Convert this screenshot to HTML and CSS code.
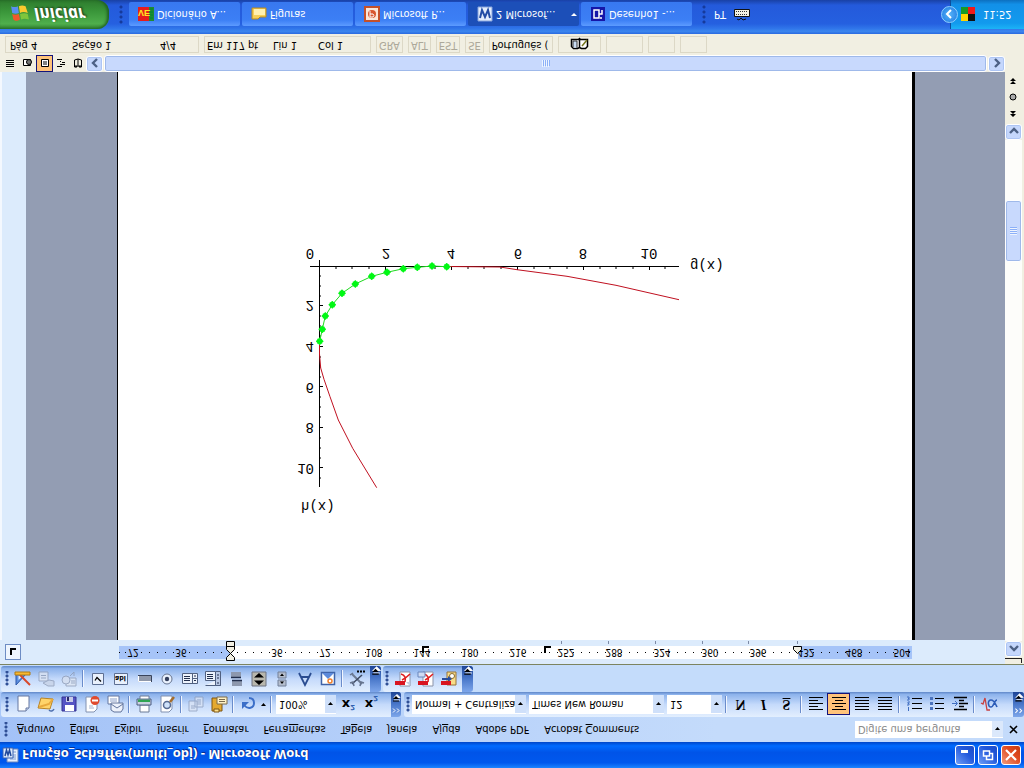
FILE: index.html
```html
<!DOCTYPE html>
<html lang="pt">
<head>
<meta charset="utf-8">
<title>Função_Schaffer(multi_obj) - Microsoft Word</title>
<link rel="stylesheet" href="styles.css">
</head>
<body>
<svg class="defs" aria-hidden="true">
  <defs>
    <symbol id="more" viewBox="0 0 10 24"><path d="M3 17.500h6M3 20h6l-3 3z" stroke="#fff" fill="#fff"/><path d="M2 16.500h6" stroke="#000"/><path d="M2 18.500h6l-3 3z" fill="#000"/></symbol>
    <symbol id="chev" viewBox="0 0 10 24"><path d="M2 4l2 2-2 2M6 4l2 2-2 2" stroke="#fff" fill="none"/><path d="M3 16.500h6M3 19h6l-3 3z" stroke="#fff" fill="#fff"/><path d="M2 15.500h6" stroke="#000"/><path d="M2 17.500h6l-3 3z" fill="#000"/></symbol>
    <symbol id="drop" viewBox="0 0 9 9"><path d="M2 3h5L4.500 6z" fill="#000"/></symbol>
    <marker id="dot" viewBox="0 0 8 8" refX="4" refY="4" markerWidth="8" markerHeight="8" markerUnits="userSpaceOnUse"><path d="M4 0l4 4-4 4-4-4zM1.500 1.500h5v5h-5z" fill="#00f814"/></marker>
  </defs>
</svg>
<div class="screen">
  <header class="titlebar">
    <svg width="17" height="17" viewBox="0 0 17 17"><path d="M5 1h11v13H5z" fill="#e8effc" stroke="#6b86bd"/><path d="M8 4h6M8 6h6M8 8h6M8 11h6" stroke="#7e9bd0"/><path d="M1 5h10v10H1z" fill="#dce8fb" stroke="#3b62b0"/><path d="M3 7l1.500 6L6 8l1.500 5L9 7" fill="none" stroke="#234a9c" stroke-width="1.500"/></svg>
    <h1>Função_Schaffer(multi_obj) - Microsoft Word</h1>
    <button class="wbtn" aria-label="Minimizar"><svg width="16" height="16"><path d="M4 10h7v3H4z" fill="#fff"/></svg></button>
    <button class="wbtn" aria-label="Restaurar"><svg width="16" height="16"><path d="M6.500 7V3.500h6v6H10" fill="none" stroke="#fff" stroke-width="1.500"/><path d="M3.500 7h6v5h-6z" fill="none" stroke="#fff" stroke-width="1.500"/></svg></button>
    <button class="wbtn close" aria-label="Fechar"><svg width="16" height="16"><path d="M3 3l10 10M13 3L3 13" stroke="#fff" stroke-width="2.200"/></svg></button>
  </header>

  <nav class="menubar">
    <span class="grip"></span>
    <a href="#"><u>A</u>rquivo</a><a href="#"><u>E</u>ditar</a><a href="#">E<u>x</u>ibir</a><a href="#"><u>I</u>nserir</a><a href="#"><u>F</u>ormatar</a><a href="#">Ferra<u>m</u>entas</a><a href="#">Ta<u>b</u>ela</a><a href="#"><u>J</u>anela</a><a href="#">Aj<u>u</u>da</a><a href="#">Adobe PDF</a><a href="#">Acrobat <u>C</u>omments</a>
    <div class="ask"><input type="text" placeholder="Digite uma pergunta" aria-label="Digite uma pergunta"><svg width="11" height="16" viewBox="-1 -4 11 16"><use href="#drop" width="9" height="9"/></svg></div>
    <button class="closedoc" aria-label="Fechar documento"><svg width="10" height="10"><path d="M1 1l7 7M8 1L1 8" stroke="#000" stroke-width="1.600"/></svg></button>
  </nav>

  <div class="row">
    <div class="bar">
      <span class="grip"></span>
      <button class="tool" aria-label="Novo"><svg viewBox="0 0 18 18"><path d="M4 2h8l3 3v12H4z" fill="#fff" stroke="#6477a0"/><path d="M12 2v3h3" fill="#cdd9f0" stroke="#6477a0"/></svg></button>
      <button class="tool" aria-label="Abrir"><svg viewBox="0 0 18 18"><path d="M1 5l12-1 3 10-12 1z" fill="#ffd46a" stroke="#b98424"/><path d="M2 6l10 3 4 5" fill="none" stroke="#e9a93c" stroke-width="2"/><path d="M12 3c2-2 4-1 5 1" fill="none" stroke="#4d6fae" stroke-width="1.500"/></svg></button>
      <button class="tool" aria-label="Salvar"><svg viewBox="0 0 18 18"><path d="M2 2h14v14H2z" fill="#5554c4" stroke="#343391"/><path d="M5 2h9v6H5z" fill="#fff"/><path d="M6 11h7v5H6z" fill="#c8cbe8"/><path d="M7 12h2v4H7z" fill="#29296b"/></svg></button>
      <button class="tool" aria-label="Permissão"><svg viewBox="0 0 18 18"><path d="M3 1h8l3 3v12H3z" fill="#fff" stroke="#8191b0"/><path d="M6 5h5M6 7h4" stroke="#a9b5ce"/><circle cx="12" cy="12.500" r="4.500" fill="#e04a2d"/><path d="M9 12.500h6" stroke="#fff" stroke-width="2"/></svg></button>
      <button class="tool" aria-label="Correio"><svg viewBox="0 0 18 18"><path d="M2 9h11v8H2z" fill="#fff" stroke="#6477a0"/><path d="M4 12h7M4 14h7" stroke="#8da0c9"/><path d="M5 3l3-2h7l2 3v6H5z" fill="#edf1fa" stroke="#62749c"/><path d="M5 9l6-4 6 4" fill="none" stroke="#62749c"/></svg></button>
      <span class="sep"></span>
      <button class="tool" aria-label="Imprimir"><svg viewBox="0 0 18 18"><path d="M5 1h9v7H5z" fill="#fff" stroke="#6b7a95"/><path d="M2 8h14v6H2z" fill="#cbd3e1" stroke="#4d5d80"/><path d="M3 11h12v2.500H3z" fill="#31a453"/><path d="M5 14h9v3H5z" fill="#fff" stroke="#6b7a95"/></svg></button>
      <button class="tool" aria-label="Visualizar"><svg viewBox="0 0 18 18"><path d="M3 1h8l3 3v13H3z" fill="#fff" stroke="#8191b0"/><circle cx="9" cy="8" r="3.500" fill="#cfe2fa" stroke="#566a91" stroke-width="1.500"/><path d="M12 11l4 5" stroke="#a56c2a" stroke-width="2.500"/></svg></button>
      <span class="sep"></span>
      <button class="tool faded" aria-label="Copiar"><svg viewBox="0 0 18 18"><path d="M2 2h8v10H2zM8 6h8v10H8z" fill="#dce5f5" stroke="#8b9bba"/><path d="M4 5h4M4 7h4M10 9h4M10 11h4M10 13h4" stroke="#8b9bba"/></svg></button>
      <button class="tool" aria-label="Colar"><svg viewBox="0 0 18 18"><path d="M2 2h10v13H2z" fill="#e5a92f" stroke="#7d5413"/><path d="M4 1h5v3H4z" fill="#ffe18a" stroke="#7d5413"/><path d="M7 9h10v7H7z" fill="#fff1c5" stroke="#7a6a4c"/><path d="M9 11.500h6M9 13.500h6" stroke="#7a6a4c"/></svg></button>
      <span class="sep"></span>
      <button class="tool" aria-label="Desfazer"><svg viewBox="0 0 18 18"><path d="M5 8c4-5 10-3 10 2 0 3-2 5-5 5" fill="none" stroke="#3c6fc8" stroke-width="2"/><path d="M3 4v7h7z" fill="#3c6fc8"/></svg></button>
      <svg class="arrow" width="9" height="9"><use href="#drop"/></svg>
      <span class="sep"></span>
      <label class="combo zoom"><select aria-label="Zoom"><option>100%</option></select><svg width="11" height="18" viewBox="-1 -5 11 18"><use href="#drop" width="9" height="9"/></svg></label>
      <button class="tool" aria-label="Sobrescrito"><b>x<sup>2</sup></b></button>
      <button class="tool" aria-label="Subscrito"><b>x<sub>2</sub></b></button>
      <span class="grow"></span>
      <svg class="cap" width="10" viewBox="0 0 10 24"><use href="#chev" width="10" height="24"/></svg>
    </div>
    <div class="bar fill">
      <span class="grip short"></span>
      <label class="combo style"><select aria-label="Estilo"><option>Normal + Centraliza</option></select><svg width="11" height="18" viewBox="-1 -5 11 18"><use href="#drop" width="9" height="9"/></svg></label>
      <label class="combo font"><select aria-label="Fonte"><option>Times New Roman</option></select><svg width="11" height="18" viewBox="-1 -5 11 18"><use href="#drop" width="9" height="9"/></svg></label>
      <label class="combo size"><select aria-label="Tamanho"><option>12</option></select><svg width="11" height="18" viewBox="-1 -5 11 18"><use href="#drop" width="9" height="9"/></svg></label>
      <span class="sep"></span>
      <button class="tool serif"><b>N</b></button>
      <button class="tool serif"><b><i>I</i></b></button>
      <button class="tool serif"><b><u>S</u></b></button>
      <span class="sep"></span>
      <button class="tool" aria-label="Esquerda"><svg viewBox="0 0 18 18"><path d="M2 3.500h14M2 6.500h9M2 9.500h14M2 12.500h9M2 15.500h14" stroke="#000"/></svg></button>
      <button class="tool on" aria-label="Centralizar"><svg viewBox="0 0 18 18"><path d="M2 3.500h14M5 6.500h8M2 9.500h14M5 12.500h8M2 15.500h14" stroke="#000"/></svg></button>
      <button class="tool" aria-label="Direita"><svg viewBox="0 0 18 18"><path d="M2 3.500h14M2 6.500h14M2 9.500h14M2 12.500h14M2 15.500h14" stroke="#000"/></svg></button>
      <button class="tool" aria-label="Justificar"><svg viewBox="0 0 18 18"><path d="M2 3.500h14M2 6.500h14M2 9.500h14M2 12.500h14M2 15.500h14" stroke="#000"/></svg></button>
      <span class="sep"></span>
      <button class="tool" aria-label="Numeração"><svg viewBox="0 0 18 18"><path d="M7 4.500h10M7 9.500h10M7 14.500h10" stroke="#000"/><path d="M3.500 2v4M2 8h2v1.500H3V11h2M2 13h2v3H2M3 14.500h1" stroke="#3f6dc0" fill="none"/></svg></button>
      <button class="tool" aria-label="Marcadores"><svg viewBox="0 0 18 18"><path d="M7 4.500h9M7 9.500h9M7 14.500h9" stroke="#000"/><path d="M2 3h3v3H2zM2 8h3v3H2zM2 13h3v3H2z" fill="#4a72bd"/></svg></button>
      <button class="tool" aria-label="Recuo"><svg viewBox="0 0 18 18"><path d="M3 3.500h13M8 6.500h5M8 9.500h9M8 12.500h5M3 15.500h13" stroke="#000" stroke-width="1.500"/><path d="M1 9.500h5M4 7l2.500 2.500L4 12" stroke="#3f6dc0" fill="none"/></svg></button>
      <span class="sep"></span>
      <button class="tool" aria-label="Equação"><svg viewBox="0 0 18 18"><path d="M1 10l2-1 2 6 2-12h3" stroke="#c84040" fill="none" stroke-width="1.300"/><path d="M17 6c-2 4-3 7-6 7-4 0-3-7 0-7 3 0 3 7 6 7" stroke="#2c5cb8" fill="none" stroke-width="1.600"/></svg></button>
      <span class="grow"></span>
      <svg class="cap" width="11" viewBox="0 0 10 24"><use href="#chev" width="10" height="24"/></svg>
    </div>
  </div>

  <div class="row second">
    <div class="bar">
      <span class="grip"></span>
      <button class="tool" aria-label="Modo de design"><svg viewBox="0 0 18 18"><path d="M2 3v11h10z" fill="#5b8fe0" stroke="#2c57a8"/><path d="M4.500 8v4h4z" fill="#e4effd"/><path d="M6 13L16 3" stroke="#d9482a" stroke-width="2"/><path d="M1 13h15v3H1z" fill="#f8b830" stroke="#b07a10"/></svg></button>
      <button class="tool faded" aria-label="Propriedades"><svg viewBox="0 0 18 18"><path d="M2 7h9v9H2z" fill="#dfe6f2" stroke="#8c99b3"/><path d="M4 10h5M4 12.500h5" stroke="#8c99b3"/><path d="M6 5l5-3h6v5l-5 1z" fill="#c7d2e6" stroke="#8c99b3"/></svg></button>
      <button class="tool faded" aria-label="Código"><svg viewBox="0 0 18 18"><path d="M6 2h10v8H6z" fill="#dfe6f2" stroke="#8c99b3"/><circle cx="6" cy="8" r="4" fill="#d5deee" stroke="#8c99b3"/><path d="M11 5h4M11 7h4M10 12l4 4M14 12v4" stroke="#8c99b3"/></svg></button>
      <span class="sep"></span>
      <button class="tool" aria-label="Caixa de seleção"><svg viewBox="0 0 18 18"><path d="M3.500 3.500h11v11h-11z" fill="#e9f1fd" stroke="#5d6f93"/><path d="M6 9.500l2-3 4 4" fill="none" stroke="#000" stroke-width="1.300" transform="matrix(1 0 0 -1 0 17)"/></svg></button>
      <button class="tool" aria-label="Caixa de texto"><svg viewBox="0 0 18 18"><path d="M2.500 3.500h13v11h-13z" fill="#e9f1fd" stroke="#5d6f93"/><text x="3" y="12" class="tiny">abl</text></svg></button>
      <button class="tool" aria-label="Botão"><svg viewBox="0 0 18 18"><path d="M3 6h13v6H3z" fill="#8f98aa"/><path d="M3.500 12V6.500H16" fill="none" stroke="#fff"/><path d="M3 12.500h13.500V6" fill="none" stroke="#39445c"/></svg></button>
      <button class="tool" aria-label="Opção"><svg viewBox="0 0 18 18"><circle cx="9" cy="9" r="5" fill="#e9f1fd" stroke="#66748f"/><circle cx="9" cy="9" r="2.200" fill="#333f5c"/></svg></button>
      <button class="tool" aria-label="Lista"><svg viewBox="0 0 18 18"><path d="M1.500 4.500h15v10h-15zM11.500 4v11M11 9.500h5" fill="#edf3fc" stroke="#506080"/><path d="M3 7.500h6M3 9.500h6M3 11.500h6M13 7.500h2M13 12h2" stroke="#222f4d"/></svg></button>
      <button class="tool" aria-label="Combinação"><svg viewBox="0 0 18 18"><path d="M1.500 2.500h15v5h-5v9h-10v-9h10" fill="#edf3fc" stroke="#506080"/><path d="M11.500 2.500h5v14h-5z" fill="#b9c8e4" stroke="#506080"/><path d="M3 9.500h6M3 11.500h6M3 13.500h6M13 5h2M13 10h2M13 13h2" stroke="#222f4d"/></svg></button>
      <button class="tool" aria-label="Alternar"><svg viewBox="0 0 18 18"><path d="M5 2h10v5H5zM4 11h10v5H4z" fill="#8d98ae"/><path d="M5 7.500h10M4 10.500h10" stroke="#222f4d" stroke-width="1.500"/></svg></button>
      <button class="tool" aria-label="Rotação"><svg viewBox="0 0 18 18"><path d="M2 2h14v14H2z" fill="#b8b7ad" stroke="#6d7381"/><path d="M4 7.500h10L9 3zM4 10.500h10L9 15z" fill="#000"/></svg></button>
      <button class="tool" aria-label="Rolagem"><svg viewBox="0 0 18 18"><path d="M5 2h8v6H5zM5 10h8v6H5z" fill="#b4bdcd" stroke="#728099"/><path d="M7 6.500h4L9 4zM7 12h4l-2 2.500z" fill="#000"/></svg></button>
      <button class="tool" aria-label="Rótulo"><svg viewBox="0 0 18 18"><path d="M3 15L9 3l6 12M5 11h8" fill="none" stroke="#2a4c90" stroke-width="1.800"/></svg></button>
      <button class="tool" aria-label="Imagem"><svg viewBox="0 0 18 18"><path d="M2.500 3.500h13v12h-13z" fill="#fff" stroke="#3f63a8" stroke-width="1.500"/><path d="M3 15l6-6 6 6z" fill="#5c8ada"/><circle cx="11" cy="7" r="2" fill="none" stroke="#ef7f2c" stroke-width="1.500"/></svg></button>
      <span class="sep"></span>
      <button class="tool" aria-label="Mais controles"><svg viewBox="0 0 18 18"><path d="M4 14L14 4" stroke="#6d7b94" stroke-width="2"/><path d="M4 4l10 9" stroke="#3d4961" stroke-width="1.500"/><path d="M2 5l3 1 1-4M16 5l-3 1-1-4M2 13l3 2" fill="none" stroke="#66748f" stroke-width="1.500"/><path d="M9 16.500h2M12 16.500h2M15 16.500h2" stroke="#000" stroke-width="2"/></svg></button>
      <svg class="cap" width="11" viewBox="0 0 10 24"><use href="#more" width="10" height="24"/></svg>
    </div>
    <div class="bar">
      <span class="grip short"></span>
      <button class="tool" aria-label="PDF"><svg viewBox="0 0 18 18"><path d="M6 2h10v14H6z" fill="#fff" stroke="#8b93a8"/><path d="M16 2v4h-4z" fill="#c4cee0"/><path d="M7 14c4-1 5-4 4-8M8 8c4 2 6 4 8 6" stroke="#e02020" fill="none" stroke-width="1.500"/><path d="M1 3h10v4H1z" fill="#d81420"/></svg></button>
      <button class="tool" aria-label="PDF por e-mail"><svg viewBox="0 0 18 18"><path d="M6 2h10v14H6z" fill="#fff" stroke="#8b93a8"/><path d="M7 14c4-1 5-4 4-8M8 8c4 2 6 4 8 6" stroke="#e02020" fill="none" stroke-width="1.500"/><path d="M1 11h7v5H1z" fill="#cfdcf4" stroke="#6b87bd"/><path d="M1 3h10v4H1z" fill="#d81420"/></svg></button>
      <button class="tool" aria-label="PDF para revisão"><svg viewBox="0 0 18 18"><path d="M7 3h9v13H7z" fill="#f8dc88" stroke="#98753a"/><circle cx="12" cy="12" r="2.500" fill="#fff" stroke="#8a6a2a"/><path d="M2 8h6V6l4 3-4 3v-2H2z" fill="#284c9c"/><path d="M1 3h10v4H1z" fill="#d81420"/></svg></button>
      <svg class="cap" width="11" viewBox="0 0 10 24"><use href="#more" width="10" height="24"/></svg>
    </div>
  </div>

  <div class="editor">
    <div class="work">
      <div class="rulerrow">
        <button class="tabkind" aria-label="Tabulação"><svg width="14" height="14"><path d="M5 4v6h5" fill="none" stroke="#000" stroke-width="2"/></svg></button>
        <svg class="ruler" width="800" height="24" viewBox="114 104 800 24">
          <path d="M119 109h793v13H119z" fill="#a6c4f8"/><path d="M231 109h567v13H231z" fill="#fff"/>
          <path d="M119 115.500h1M125 115.500h1" stroke="#000"/>
          <path d="M141 115.500h772" stroke="#000" stroke-dasharray="1 7 1 7 1 7 1 7 1 15"/>
          <path d="M561.500 124v3M608.500 124v3M655.500 124v3M702.500 124v3M748.500 124v3M797.500 124v3" stroke="#7c8aa6"/>
          <g class="nums"><text x="133" y="119">72</text><text x="181" y="119">36</text><text x="277" y="119">36</text><text x="325" y="119">72</text><text x="374" y="119">108</text><text x="422" y="119">144</text><text x="470" y="119">180</text><text x="518" y="119">216</text><text x="566" y="119">252</text><text x="614" y="119">288</text><text x="662" y="119">324</text><text x="710" y="119">360</text><text x="758" y="119">396</text><text x="806" y="119">432</text><text x="854" y="119">468</text><text x="902" y="119">504</text></g>
          <path d="M423 115v6h6M545 115v6h6" fill="none" stroke="#000" stroke-width="2"/>
          <path d="M226.500 107.500h8v3l-4 4-4-4zM226.500 121.500v-3l4-4 4 4v3zM226.500 121.500h8v5h-8z" fill="#f1efe2" stroke="#000"/>
          <path d="M793.500 121.500v-3l4-4 4 4v3z" fill="#f1efe2" stroke="#000"/>
        </svg>
      </div>
      <div class="canvas">
        <div class="vruler"></div>
        <main class="desk">
          <div class="page">
            <svg class="chart" width="450" height="290" viewBox="290 248 450 290">
              <path d="M310 501.500h369M319.500 508V281" stroke="#000" fill="none"/>
              <path d="M336 501v-2M352 501v-2M369 501v-2M385.500 501v-3M402 501v-2M418 501v-2M435 501v-2M451.500 501v-3M468 501v-2M484 501v-2M501 501v-2M517.500 501v-3M534 501v-2M550 501v-2M567 501v-2M583.500 501v-3M600 501v-2M616 501v-2M633 501v-2M649.500 501v-3M665 501v-2" stroke="#000"/>
              <path d="M320 492h1M320 482h1M320 472h1M320 462.500h3M320 452h1M320 442h1M320 432h1M320 421.500h3M320 411h1M320 401h1M320 391h1M320 381.500h3M320 371h1M320 361h1M320 351h1M320 340.500h3M320 330h1M320 320h1M320 310h1M320 300.500h3M320 290h1" stroke="#000"/>
              <path d="M319.500 427v-13L320.700 400 324 388.700 330 371.300 338.300 348 352.700 319.700 376.700 280.300M447 501.500L500 501 517 498.300 567 491.700 616 482.700 679 468.300" fill="none" stroke="#c01020"/>
              <path class="front" d="M319.700 426.700L322.300 438.700 325.300 452 332.300 463.300 342 474.700 355.300 484 371.700 491.700 387 495.700 403.300 499.300 417.300 500.700 432 502 446.700 501.300"/>
              <g class="lbl"><text x="310" y="519">0</text><text x="386" y="519">2</text><text x="451" y="519">4</text><text x="518" y="519">6</text><text x="583" y="519">8</text><text x="649" y="519">10</text></g>
              <g class="lbl end"><text x="314" y="467">2</text><text x="314" y="426">4</text><text x="314" y="385">6</text><text x="314" y="345">8</text><text x="314" y="304">10</text></g>
              <g class="lbl start"><text x="690" y="507">g(x)</text><text x="301" y="266">h(x)</text></g>
            </svg>
          </div>
        </main>
      </div>
      <div class="hscroll">
        <div class="views">
          <button aria-label="Normal"><svg viewBox="0 0 16 16"><path d="M4 4.500h8M4 6.500h8M4 8.500h8M4 10.500h8" stroke="#000"/></svg></button>
          <button aria-label="Web"><svg viewBox="0 0 16 16"><path d="M4.500 5.500h7v6h-7z" fill="#fff" stroke="#000"/><circle cx="10" cy="9" r="2.500" fill="#777" stroke="#000"/></svg></button>
          <button class="on" aria-label="Impressão"><svg viewBox="0 0 16 16"><path d="M4.500 4.500h7v7h-7z" fill="#fff" stroke="#000"/><path d="M6 7h4M6 9h4" stroke="#000"/></svg></button>
          <button aria-label="Estrutura"><svg viewBox="0 0 16 16"><path d="M4 4.500h5M7 6.500h5M9 8.500h3M4 11.500h5M7 9.500h1" stroke="#000"/></svg></button>
          <button aria-label="Leitura"><svg viewBox="0 0 16 16"><path d="M8 5L4.500 4v7L8 12l3.500-1V4zM8 5v7M6 3v3M10 3v3" fill="none" stroke="#000"/></svg></button>
        </div>
        <button class="sbtn" aria-label="Esquerda"><svg viewBox="0 0 16 16"><path d="M10 4L6 8l4 4" fill="none" stroke="#4d6185" stroke-width="2.400"/></svg></button>
        <div class="thumb wide"><svg width="8" height="7"><path d="M.5 0v7M2.500 0v7M4.500 0v7M6.500 0v7" stroke="#eef4fe"/><path d="M1.500 1v6M3.500 1v6M5.500 1v6M7.500 1v6" stroke="#8cb0f8"/></svg></div>
        <button class="sbtn" aria-label="Direita"><svg viewBox="0 0 16 16"><path d="M6 4l4 4-4 4" fill="none" stroke="#4d6185" stroke-width="2.400"/></svg></button>
      </div>
    </div>
    <div class="vscroll">
      <div class="split"></div>
      <button class="sbtn" aria-label="Acima"><svg viewBox="0 0 16 16"><path d="M4 10l4-4 4 4" fill="none" stroke="#4d6185" stroke-width="2.400"/></svg></button>
      <div class="track"><div class="thumb tall"><svg width="7" height="8"><path d="M0 .5h7M0 2.500h7M0 4.500h7M0 6.500h7" stroke="#eef4fe"/><path d="M0 1.500h7M0 3.500h7M0 5.500h7M0 7.500h7" stroke="#8cb0f8"/></svg></div></div>
      <button class="sbtn" aria-label="Abaixo"><svg viewBox="0 0 16 16"><path d="M4 6l4 4 4-4" fill="none" stroke="#4d6185" stroke-width="2.400"/></svg></button>
      <div class="browse">
        <svg width="8" height="8"><path d="M1 4h6L4 1zM1 7h6L4 4z" fill="#000"/></svg>
        <svg width="8" height="8"><circle cx="4" cy="4" r="3" fill="#aaa" stroke="#000"/></svg>
        <svg width="8" height="8"><path d="M1 1h6L4 4zM1 4h6L4 7z" fill="#000"/></svg>
      </div>
    </div>
  </div>

  <div class="status">
    <div class="cell pos"><span>Pág 4</span><span>Seção 1</span><span>4/4</span></div>
    <div class="cell where"><span>Em 117 pt</span><span>Lin 1</span><span>Col 1</span></div>
    <div class="cell off">GRA</div><div class="cell off">ALT</div><div class="cell off">EST</div><div class="cell off">SE</div>
    <div class="cell lang">Português (</div>
    <div class="cell book"><svg width="19" height="14"><path d="M1.500 4.500l2-2h4l2 1 2-1h4l2 2v7h-7l-1 1-1-1h-7zM9.500 4v8" fill="#fff" stroke="#000" stroke-width="1.500"/><path d="M3 4v6h4V3" fill="#c9dcf2" stroke="#333"/><path d="M12 5l5 6" stroke="#77771e" stroke-width="1.500"/></svg></div>
    <div class="cell e1"></div><div class="cell e2"></div><div class="cell e2"></div>
  </div>

  <footer class="taskbar">
    <button class="start"><svg width="22" height="20" viewBox="0 0 18 18"><path d="M3 4c2-2 4-1 6 0L8 9C6 8 4 8 2 9z" fill="#f0582c"/><path d="M10 4c2 1 4 1 7 0l-1 5c-2 1-4 1-7 0z" fill="#7fc63c"/><path d="M2 10c2-1 4-1 6 0l-1 6c-2-1-4-1-6 0z" fill="#5a8ff0"/><path d="M9 10c2 1 4 1 7 0l-2 6c-2 1-4 1-6 0z" fill="#fbc92e"/></svg>Iniciar</button>
    <span class="dots"></span>
    <div class="tasks">
      <button><svg width="16" height="16"><path d="M0 1h16v14H0z" fill="#e51c1c"/><path d="M11 1h5v14h-5z" fill="#1f8b30"/><path d="M12 4h3M12 7h3M12 10h3M12 13h3" stroke="#083"/><text x="0" y="12" class="ve">VE</text></svg><span>Dicionário A...</span></button>
      <button><svg width="16" height="16"><path d="M1 3h6l2 2h6v9H1z" fill="#f5cf58" stroke="#b88a20"/><path d="M3 7h11v6H3z" fill="#fff0b0"/></svg><span>Figuras</span></button>
      <button><svg width="16" height="16"><path d="M1 1h14v14H1z" fill="#fbe6d8" stroke="#c4502a" stroke-width="2"/><circle cx="8" cy="8" r="4" fill="#d8552d"/><path d="M6 11V5h3a2 2 0 0 1 0 3H6" fill="none" stroke="#fff"/></svg><span>Microsoft P...</span></button>
      <button class="active"><svg width="16" height="16"><path d="M1 1h14v14H1z" fill="#e4edfc" stroke="#87a4dc"/><path d="M3 4l2 8 3-7 3 7 2-8" fill="none" stroke="#234ca5" stroke-width="2"/></svg><span>2 Microsof...</span><svg class="up" width="9" height="9"><path d="M2 3h6L5 6z" fill="#fff"/></svg></button>
      <button><svg width="16" height="16"><path d="M1 1h14v14H1z" fill="#1616a8"/><path d="M4 4h5v8H4zM9 8h3v4M11 3v2" fill="none" stroke="#fff" stroke-width="1.500"/></svg><span>Desenho1 -...</span></button>
    </div>
    <span class="dots"></span>
    <span class="kb">PT</span>
    <svg width="16" height="14"><path d="M3 2l2-1 2 2 2-2 3 1" stroke="#111" fill="none"/><path d="M.5 4.500h15v7H.5z" fill="#f4f1e2" stroke="#111"/><path d="M2 6.500h12M2 9.500h12" stroke="#333" stroke-dasharray="1 1"/></svg>
    <div class="tray"><button class="hide" aria-label="Ocultar"><svg width="16" height="16"><path d="M9 4L5 8l4 4" fill="none" stroke="#fff" stroke-width="2"/></svg></button>
      <svg width="14" height="14"><path d="M0 0h7v7H0z" fill="#ffd500"/><path d="M7 0h7v7H7z" fill="#111"/><path d="M0 7h7v7H0z" fill="#169b24"/><path d="M7 7h7v7H7z" fill="#f11818"/></svg>
      <time>11:52</time></div>
  </footer>
</div>
</body>
</html>
```
FILE: styles.css
```css
* { box-sizing: border-box; }
body { margin: 0; overflow: hidden; font: 11px/14px "DejaVu Sans Condensed", "Liberation Sans", sans-serif; color: #000; }
button, input, select { font: inherit; color: inherit; margin: 0; padding: 0; border: 0; background: none; border-radius: 0; }
svg { display: block; flex: none; }
a { color: inherit; text-decoration: none; }
.defs { position: absolute; width: 0; height: 0; }

/* The whole desktop is mirrored top to bottom */
.screen { height: 100vh; display: flex; flex-direction: column; transform: scaleY(-1); background: #c3daf9; }
.grow { flex: 1; }

.titlebar { height: 26px; flex: none; display: flex; align-items: center; gap: 3px; padding: 0 3px 0 2px; background: linear-gradient(#1c84ff, #0058ee 20%, #0054e8 60%, #006bff 85%, #0046c8); }
.titlebar h1 { flex: 1; margin: 0; font: bold 13px/16px "Open Sans", "Liberation Sans", sans-serif; color: #fff; text-shadow: 1px 1px #0a2f8c; white-space: nowrap; }
.wbtn { width: 20px; height: 20px; display: grid; place-items: center; border: 1px solid #fff; border-radius: 3px; background: linear-gradient(135deg, #6f9cf5, #2258dc 60%, #1c4cc8); }
.wbtn.close { background: linear-gradient(135deg, #f09a7c, #e04a20 60%, #c63a10); }

.menubar { height: 25px; flex: none; display: flex; align-items: center; gap: 15px; padding-right: 5px; white-space: nowrap; background: linear-gradient(90deg, #a3c2f7, #c4dbfb 70%); }
.grip { flex: none; align-self: center; width: 10px; height: 15px; background: radial-gradient(circle at 2px 2px, #2f4f96 1px, transparent 2px) 4px 0 / 4px 4px repeat-y; }
.grip.short { width: 8px; background-position-x: 2px; }
.menubar .grip { margin-right: -8px; }
.ask { margin-left: auto; display: flex; align-items: center; width: 148px; height: 17px; background: #fff; }
.ask input { flex: 1; min-width: 0; height: 17px; padding-left: 3px; }
.ask input::placeholder { color: #8a8a8a; opacity: 1; }
.ask svg { background: #dbe8fb; }
.closedoc { margin-left: -9px; }

.row { height: 25px; flex: none; display: flex; gap: 3px; padding-left: 1px; background: linear-gradient(90deg, #a9c7f8, #c4dbfb 60%); }
.second { height: 27px; gap: 2px; padding-bottom: 1px; background: #c4dcfb; }
.bar { display: flex; align-items: center; border-radius: 3px; background: linear-gradient(#e3effe, #c5dafb 50%, #8db3ec 90%, #5f87c8); }
.bar:first-child { min-width: 400px; }
.second .bar:first-child { min-width: 0; }
.bar.fill { flex: 1; }
.tool { flex: none; width: 23px; height: 22px; display: grid; place-items: center; font: 13px/16px "DejaVu Sans", sans-serif; }
.tool svg { width: 18px; height: 18px; }
.serif { font: 14px/16px "Liberation Serif", serif; }
.tool sub, .tool sup { font-size: 7px; line-height: 1px; color: #3060b0; }
.tool.on, .views .on { background: #ffc37a; border: 1px solid #14147a; }
.faded { opacity: .75; }
.tiny { font: bold 7px "DejaVu Sans Condensed", sans-serif; }
.sep { flex: none; width: 6px; height: 17px; background: linear-gradient(90deg, transparent 2px, #6a8ccb 2px 3px, #f1f6ff 3px 4px, transparent 4px); }
.cap { height: 100%; align-self: stretch; margin-left: 2px; border-radius: 0 3px 3px 0; background: linear-gradient(#7da6ea, #4a78ca 50%, #1d4496); }
.combo { flex: none; display: flex; align-items: center; height: 19px; margin-right: 3px; background: #fff; }
.combo select { flex: 1; min-width: 0; height: 18px; padding: 0 0 0 3px; appearance: none; overflow: hidden; text-overflow: clip; }
.combo svg { background: #cfe0fa; }
.zoom { width: 60px; margin: 0 1px 0 2px; }
.style { width: 114px; }
.font { width: 135px; }
.size { width: 55px; margin-right: 1px; }

.editor { flex: 1; min-height: 0; display: flex; border-top: 1px solid #7c8460; background: #dcebfc; }
.work { flex: 1; min-width: 0; display: flex; flex-direction: column; }
.rulerrow { height: 24px; flex: none; display: flex; align-items: center; overflow: hidden; }
.tabkind { flex: none; width: 16px; height: 16px; margin-left: 5px; border: 1px solid #6d8cc4; background: #eef5fe; }
.ruler { margin-left: 93px; }
.nums { font: 10px "DejaVu Sans Condensed", sans-serif; text-anchor: middle; }
.canvas { flex: 1; min-height: 0; display: flex; }
.vruler { width: 26px; flex: none; background: #dcebfc; border-left: 2px solid #f4f8fe; }
.desk { flex: 1; min-width: 0; padding: 0 90px 0 91px; background: #939db3; display: flex; }
.page { flex: 1; min-width: 0; padding: 120px 0 0 172px; background: #fff; border-left: 1px solid #000; border-right: 3px solid #000; overflow: hidden; }
.front { fill: none; stroke: #20d820; marker: url(#dot); }
.lbl { font: 14px "Liberation Mono", monospace; text-anchor: middle; }
.end { text-anchor: end; }
.start { text-anchor: start; }

.hscroll { height: 17px; flex: none; display: flex; background: #f1efe2; }
.views { width: 86px; display: flex; padding-left: 2px; }
.views button { width: 17px; height: 17px; display: grid; place-items: center; }
.views svg { width: 16px; height: 16px; }
.sbtn { flex: none; width: 17px; height: 16px; display: grid; place-items: center; border: 1px solid #fff; border-radius: 3px; background: #c5d7fc; box-shadow: inset 0 0 0 1px #adc5f4; }
.sbtn svg { width: 16px; height: 16px; }
.thumb { display: grid; place-items: center; border: 1px solid #fff; border-radius: 3px; background: #c8d9fd; box-shadow: inset 0 0 0 1px #9fb9ea; }
.wide { flex: 1; margin: 0 1px; }
.vscroll { width: 19px; flex: none; display: flex; flex-direction: column; background: #f1efe2; padding-right: 2px; }
.split { flex: none; height: 5px; margin: 1px 0; border: solid #222; border-width: 0 1px 1px 0; background: #f1efe2; }
.track { flex: 1; background: #fdfdfa; display: flex; flex-direction: column; }
.tall { height: 62px; margin-top: auto; margin-bottom: 60px; }
.browse { flex: none; height: 69px; padding: 6px 2px 22px 0; display: flex; flex-direction: column; align-items: center; justify-content: space-between; }

.status { height: 21px; flex: none; display: flex; align-items: center; gap: 5px; padding-left: 5px; background: #f1efe2; white-space: nowrap; }
.cell { height: 17px; padding: 0 2px; border: 1px solid #dcd8c6; }
.pos { width: 194px; display: grid; grid-template-columns: 62px 88px 1fr; padding-left: 4px; }
.where { width: 167px; display: grid; grid-template-columns: 66px 45px 1fr; }
.off { color: #aca899; }
.lang { width: 64px; }
.book { width: 43px; display: grid; place-items: center; }
.e1 { width: 37px; }
.e2 { width: 27px; }

.taskbar { height: 34px; flex: none; display: flex; align-items: center; padding-top: 5px; color: #fff; background: linear-gradient(#2a6ae0, #3c86ee 8%, #3076ea 16%, #2560e0 30%, #245adb 85%, #1941a5); }
.taskbar .start { width: 109px; height: 29px; display: flex; align-items: center; gap: 3px; padding-left: 9px; border-radius: 0 12px 12px 0; background: linear-gradient(#2f7d2f, #4faf4c 18%, #3a963a 60%, #2d7a2d); box-shadow: inset -2px 0 3px #1f5f22; font: italic bold 17px/20px "Open Sans", "Liberation Sans", sans-serif; text-shadow: 1px 1px 2px #1b3d1b; }
.dots { flex: none; width: 20px; height: 20px; background: radial-gradient(circle at 2px 2px, #153a9c 1px, transparent 2px) 10px 0 / 5px 5px repeat-y; }
.tasks { display: flex; gap: 2px; }
.tasks button { width: 111px; height: 24px; display: flex; align-items: center; gap: 3px; padding-left: 9px; border-radius: 2px; white-space: nowrap; background: linear-gradient(#5c9bff, #3c7ff5 25%, #3878f0); }
.tasks .active { background: #1c4fb8; }
.up { margin-left: auto; margin-right: 1px; }
.ve { font: bold 9px "Liberation Sans", sans-serif; fill: #ffe820; }
.kb { padding: 0 8px 0 2px; }
.tray { margin-left: auto; height: 29px; width: 74px; display: flex; align-items: center; background: linear-gradient(#1cb4f6, #129aee 20%, #1290e8 85%, #0d70c0); border-left: 1px solid #0c4c9c; }
.hide { flex: none; width: 17px; height: 17px; margin: 0 3px 0 -10px; border-radius: 50%; background: radial-gradient(#56b4fa, #1d78e0); border: 1px solid #8fd0ff; }
.tray time { margin-left: 8px; }
```
